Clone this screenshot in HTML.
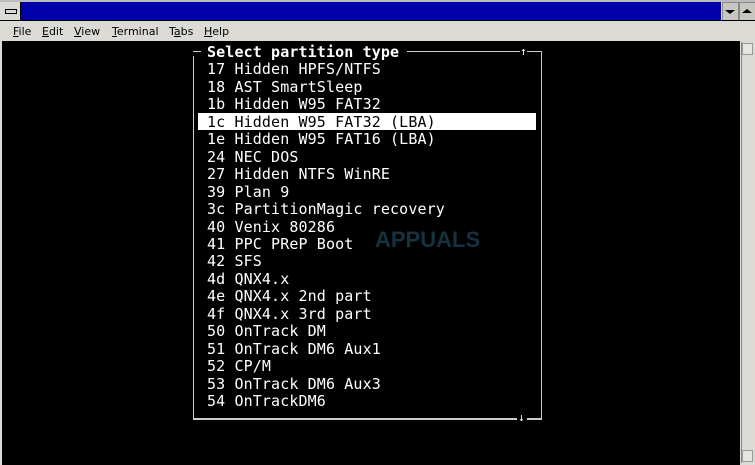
<!DOCTYPE html><html><head><style>
body{margin:0;width:755px;height:465px;background:#dcdad5;position:relative;overflow:hidden;font-family:"DejaVu Sans",sans-serif}
.a{position:absolute}
.t{font-family:"DejaVu Sans Mono",monospace;font-size:15px;color:#fff;white-space:pre;line-height:17.45px;letter-spacing:0.12px}
.menu span{margin-right:0;font-size:11px;color:#000}
</style></head><body>
<div class="a" style="left:0;top:0;width:755px;height:2px;background:#bbb"></div>
<div class="a" style="left:0;top:2px;width:20px;height:18px;background:#dcdad5;border-right:1px solid #000;border-bottom:1px solid #000"></div>
<div class="a" style="left:5px;top:9px;width:10px;height:3px;border:1px solid #000"></div>
<div class="a" style="left:21px;top:2px;width:700px;height:18px;background:#0000aa"></div>
<div class="a" style="left:722px;top:2px;width:15px;height:17px;background:#c8c6c1;border:1px solid #888"></div>
<div class="a" style="left:725px;top:10px;width:0;height:0;border-left:5px solid transparent;border-right:5px solid transparent;border-top:4px solid #000"></div>
<div class="a" style="left:739px;top:2px;width:15px;height:17px;background:#c8c6c1;border:1px solid #888"></div>
<div class="a" style="left:742px;top:9px;width:0;height:0;border-left:5px solid transparent;border-right:5px solid transparent;border-bottom:4px solid #000"></div>
<div class="a" style="left:0;top:20px;width:755px;height:1px;background:#000"></div>
<div class="a menu" style="left:13px;top:25px;font-size:11px;word-spacing:0">
<span style="position:absolute;left:0"><u>F</u>ile</span><span style="position:absolute;left:29px"><u>E</u>dit</span><span style="position:absolute;left:61px"><u>V</u>iew</span><span style="position:absolute;left:99px"><u>T</u>erminal</span><span style="position:absolute;left:156px">T<u>a</u>bs</span><span style="position:absolute;left:191px"><u>H</u>elp</span></div>
<div class="a" style="left:2px;top:41px;width:738px;height:424px;background:#000"></div>
<div class="a" style="left:741px;top:42px;width:12px;height:421px;background:#dcdad5;border-left:1px solid #888"></div>
<div class="a" style="left:742px;top:43px;width:11px;height:12px;background:#e8e6e2;border:1px solid #999;box-sizing:border-box"></div>
<div class="a" style="left:742px;top:450px;width:11px;height:12px;background:#e8e6e2;border:1px solid #999;box-sizing:border-box"></div>
<div class="a" style="left:193px;top:51px;width:347px;height:366px;border:1px solid #ccc;border-bottom:2px solid #ccc"></div>
<div class="a" style="left:193px;top:52px;width:8px;height:4px;background:#000"></div>
<div class="a" style="left:201px;top:44px;width:206px;height:16px;background:#000"></div>
<div class="a" style="left:520px;top:46px;width:7px;height:10px;background:#000"></div>
<div class="a t" style="left:520px;top:43px;font-size:11px">↑</div>
<div class="a" style="left:517px;top:410px;width:10px;height:10px;background:#000"></div>
<div class="a t" style="left:518px;top:409px;font-size:11px">↓</div>
<div class="a" style="left:198px;top:113px;width:338px;height:17px;background:#fff"></div>
<div class="a" style="left:280px;top:227px;width:190px;height:50px;color:#1a3f4f;font-family:'Liberation Sans',sans-serif;font-size:22px;font-weight:bold;padding-left:95px;box-sizing:border-box;opacity:.8">APPUALS</div>
<div class="a t" style="left:207px;top:44px"><b>Select partition type</b>
17 Hidden HPFS/NTFS
18 AST SmartSleep
1b Hidden W95 FAT32
<span style="color:#000">1c Hidden W95 FAT32 (LBA)</span>
1e Hidden W95 FAT16 (LBA)
24 NEC DOS
27 Hidden NTFS WinRE
39 Plan 9
3c PartitionMagic recovery
40 Venix 80286
41 PPC PReP Boot
42 SFS
4d QNX4.x
4e QNX4.x 2nd part
4f QNX4.x 3rd part
50 OnTrack DM
51 OnTrack DM6 Aux1
52 CP/M
53 OnTrack DM6 Aux3
54 OnTrackDM6</div>
</body></html>
